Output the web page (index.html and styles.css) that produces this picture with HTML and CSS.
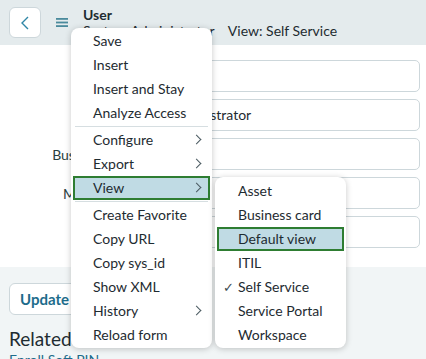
FILE: index.html
```html
<!DOCTYPE html>
<html lang="en">
<head>
  <meta charset="UTF-8" />
  <meta name="viewport" content="width=device-width, initial-scale=1.0" />
  <title>User - System Administrator</title>
  <link rel="stylesheet" href="styles.css">
</head>
<body>
  <header class="topbar">
    <button class="back-btn" aria-label="Back">
      <svg width="8" height="14" viewBox="0 0 8 14"><path d="M7 1 L1 7 L7 13" fill="none" stroke="#2f86a6" stroke-width="1.4"/></svg>
    </button>
    <span class="menu-icon">
      <svg width="12" height="9" viewBox="0 0 12 9"><rect y="0" width="12" height="1.8" fill="#4a8a9c"/><rect y="3.6" width="12" height="1.8" fill="#4a8a9c"/><rect y="7.2" width="12" height="1.8" fill="#4a8a9c"/></svg>
    </span>
    <div class="title">
      <div class="title-main">User</div>
      <div class="title-sub">System Administrator <span class="title-view">View: Self Service</span></div>
    </div>
  </header>

  <main class="form">
    <div class="form-row"><label>User ID</label><div class="field">admin</div></div>
    <div class="form-row"><label>Name</label><div class="field">Administrator</div></div>
    <div class="form-row"><label>Business phone</label><div class="field"></div></div>
    <div class="form-row"><label>Mobile phone</label><div class="field"></div></div>
    <div class="form-row"><label>Email</label><div class="field"></div></div>
  </main>

  <section class="footer-area">
    <button class="update-btn">Update</button>
    <div class="related-title">Related Links</div>
    <a href="#" class="related-link">Enroll Soft PIN</a>
  </section>

  <div class="context-menu main-menu">
    <div class="menu-item">Save</div>
    <div class="menu-item">Insert</div>
    <div class="menu-item">Insert and Stay</div>
    <div class="menu-item">Analyze Access</div>
    <div class="menu-sep"></div>
    <div class="menu-item has-sub">Configure<span class="chev"></span></div>
    <div class="menu-item has-sub">Export<span class="chev"></span></div>
    <div class="menu-item has-sub active">View<span class="chev"></span></div>
    <div class="menu-sep"></div>
    <div class="menu-item">Create Favorite</div>
    <div class="menu-item">Copy URL</div>
    <div class="menu-item">Copy sys_id</div>
    <div class="menu-item">Show XML</div>
    <div class="menu-item has-sub">History<span class="chev"></span></div>
    <div class="menu-item">Reload form</div>
  </div>

  <div class="context-menu sub-menu">
    <div class="menu-item">Asset</div>
    <div class="menu-item">Business card</div>
    <div class="menu-item active">Default view</div>
    <div class="menu-item">ITIL</div>
    <div class="menu-item checked">Self Service</div>
    <div class="menu-item">Service Portal</div>
    <div class="menu-item">Workspace</div>
  </div>
</body>
</html>
```

FILE: styles.css
```css
:root {
  --text: #1e2b31;
  --teal: #1d6c8b;
  --header-bg: #e4ebed;
  --border: #cdd7db;
  --highlight: #c0dbe4;
  --focus: #2e7d32;
}

body {
  margin: 0;
  font-family: Lato, "Open Sans", sans-serif;
  font-size: 14px;
  color: var(--text);
  background: #fff;
}

.topbar {
  height: 45px;
  background: var(--header-bg);
  display: flex;
  align-items: center;
  padding: 0 9px;
  box-sizing: border-box;
}

.back-btn {
  width: 32px;
  height: 31px;
  background: #fff;
  border: 1px solid var(--border);
  border-radius: 6px;
  display: flex;
  align-items: center;
  justify-content: center;
  padding: 0;
}

.menu-icon {
  display: flex;
  margin-left: 15px;
  margin-right: 15px;
}

.title {
  line-height: 16px;
}

.title-main {
  font-weight: 700;
}

.title-view {
  margin-left: 10px;
}

.form {
  padding: 15px 6px 19px 8px;
  display: flex;
  flex-direction: column;
  gap: 7px;
}

.form-row {
  display: grid;
  grid-template-columns: 140px 1fr;
  gap: 8px;
  align-items: center;
}

.form-row label {
  text-align: right;
  color: #293e40;
}

.field {
  height: 32px;
  box-sizing: border-box;
  border: 1px solid var(--border);
  border-radius: 5px;
  padding: 0 10px;
  line-height: 30px;
}

.footer-area {
  background: #f1f5f6;
  padding: 16px 9px 20px;
}

.update-btn {
  height: 32px;
  padding: 0 10px;
  background: #fff;
  border: 1px solid var(--border);
  border-radius: 6px;
  font-family: inherit;
  font-size: 15px;
  font-weight: 700;
  color: var(--teal);
}

.related-title {
  font-size: 19px;
  margin-top: 12px;
  line-height: 24px;
}

.related-link {
  color: var(--teal);
  text-decoration: none;
  font-size: 14px;
}

.context-menu {
  position: absolute;
  background: #fff;
  border-radius: 8px;
  box-shadow: 0 1px 6px rgba(0, 0, 0, 0.22);
  padding: 1px 0;
}

.main-menu {
  left: 71px;
  top: 28px;
  width: 141px;
}

.sub-menu {
  left: 215px;
  top: 177px;
  width: 131px;
  padding: 2px 0 1px;
}

.menu-item {
  position: relative;
  height: 24px;
  line-height: 24px;
  padding-left: 22px;
  white-space: nowrap;
}

.sub-menu .menu-item {
  padding-left: 23px;
}

.menu-item.active {
  background: var(--highlight);
  outline: 2px solid var(--focus);
  outline-offset: -2px;
  margin: 0 2px;
  padding-left: 20px;
}

.sub-menu .menu-item.active {
  padding-left: 21px;
}

.menu-sep {
  height: 1px;
  background: #d6dee1;
  margin: 1px 4px;
}

.chev {
  position: absolute;
  right: 12px;
  top: 8px;
  width: 6px;
  height: 6px;
  border-top: 1.3px solid #4a5a60;
  border-right: 1.3px solid #4a5a60;
  transform: rotate(45deg);
}

.menu-item.active .chev {
  right: 10px;
}

.checked::before {
  content: "\2713";
  position: absolute;
  left: 8px;
  font-size: 13px;
  color: #3a4a50;
}
```
